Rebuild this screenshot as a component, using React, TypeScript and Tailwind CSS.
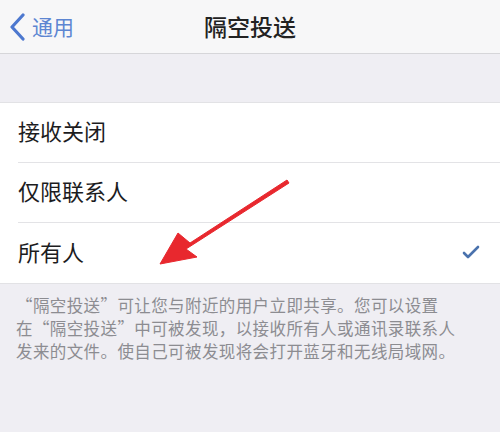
import React from 'react';

const options = ['接收关闭', '仅限联系人', '所有人'];

const App: React.FC = () => {
  const selected = 2;

  return (
    <div
      className="relative w-[500px] h-[432px] overflow-hidden bg-[#efeef3]"
      style={{ fontFamily: '"Noto Sans CJK SC", "Noto Sans", sans-serif' }}
    >
      {/* nav bar */}
      <div className="h-[54px] bg-[#f7f7f8] border-b border-[#d6d6d9] flex items-center relative">
        <div className="flex items-center pl-[8px] gap-[6px]">
          <svg width="18" height="28" viewBox="0 0 18 28" fill="none">
            <polyline
              points="15,2 4,14 15,26"
              stroke="#4d78cf"
              strokeWidth="3.2"
              strokeLinecap="round"
              strokeLinejoin="round"
            />
          </svg>
          <span className="text-[21px] text-[#5d86d2] leading-none">通用</span>
        </div>
        <div className="absolute left-0 right-0 top-0 h-full flex items-center justify-center pointer-events-none">
          <span className="text-[23px] font-medium text-[#222] leading-none">隔空投送</span>
        </div>
      </div>

      {/* spacer */}
      <div className="h-[48px]" />

      {/* options list */}
      <div className="bg-white border-y border-[#e2e2e5]">
        {options.map((label, i) => (
          <div key={label} className="pl-[18px] h-[60px] flex">
            <div
              className={`flex-1 flex items-center justify-between pr-[20px] pb-[5px] ${
                i < options.length - 1 ? 'border-b border-[#e3e3e6]' : ''
              }`}
            >
              <span className="text-[22px] text-[#1c1c1e] leading-none">{label}</span>
              {i === selected && (
                <svg width="18" height="14" viewBox="0 0 18 14" fill="none" className="mt-[2px]">
                  <polyline
                    points="2,8 6,12 16,2"
                    stroke="#4a72ad"
                    strokeWidth="2.6"
                    strokeLinecap="round"
                    strokeLinejoin="round"
                  />
                </svg>
              )}
            </div>
          </div>
        ))}
      </div>

      {/* footer note */}
      <div className="px-[16px] pt-[10px] text-[16.5px] leading-[23px] text-[#8c8c91] tracking-[0.4px]">
        <p>“隔空投送”可让您与附近的用户立即共享。您可以设置</p>
        <p>在“隔空投送”中可被发现，以接收所有人或通讯录联系人</p>
        <p>发来的文件。使自己可被发现将会打开蓝牙和无线局域网。</p>
      </div>

      {/* red annotation arrow */}
      <svg
        className="absolute left-0 top-0 pointer-events-none"
        width="500"
        height="432"
        viewBox="0 0 500 432"
      >
        <polygon
          points="287,180 190,243 178,233 160,264 197,257 186,249 289,183"
          fill="#e8282e"
          stroke="#e8282e"
          strokeWidth="1"
          strokeLinejoin="round"
        />
      </svg>
    </div>
  );
};

export default App;
